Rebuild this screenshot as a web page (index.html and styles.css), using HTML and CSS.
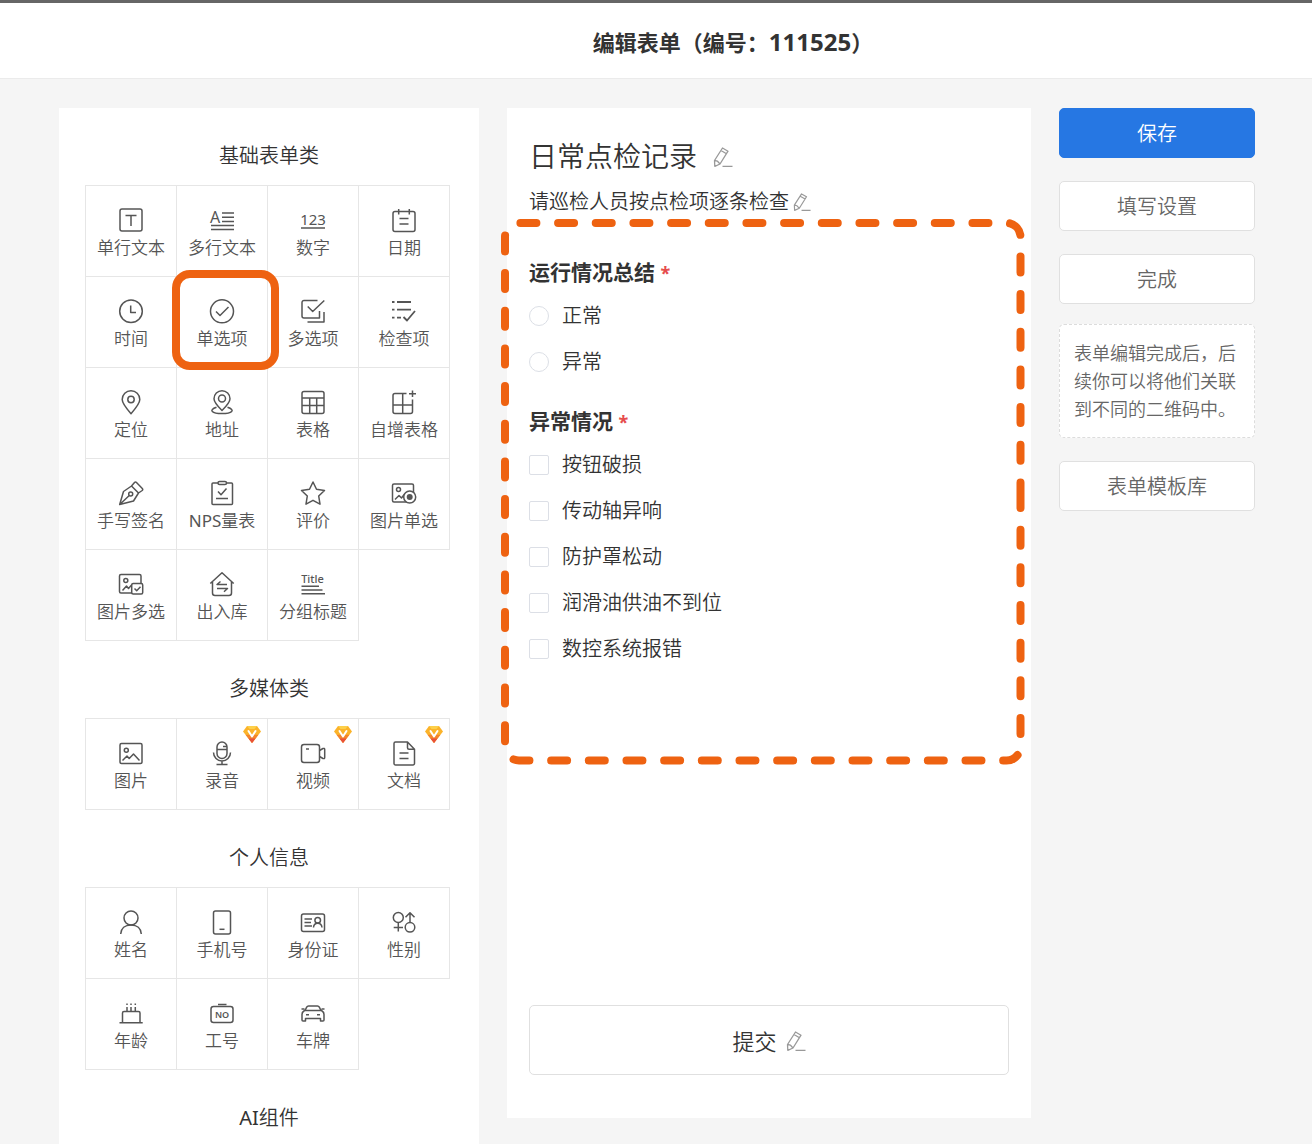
FILE: index.html
```html
<!DOCTYPE html>
<html lang="zh-CN">
<head>
<meta charset="utf-8">
<meta name="viewport" content="width=device-width, initial-scale=1">
<title>编辑表单</title>
<link rel="stylesheet" href="styles.css">
</head>
<body>
<svg class="sprite" aria-hidden="true">
  <symbol id="pencil" viewBox="0 0 20 20">
    <path d="M1.500 13.500 9.500 1 15 4.200 7 17 1.800 19.300zM8 3.500 13.500 6.800M1.500 13.500 4.500 14.200 7 17M9.500 19.300H19.500" fill="none" stroke="currentColor" stroke-width="1.300" stroke-linejoin="round"/>
  </symbol>
  <symbol id="gem" viewBox="0 0 18 18">
    <path d="M4 1h10l4 5.500L9 18 0 6.500z" fill="#fbb32a"/>
    <path d="M4 1h10l-2.500 3h-5z" fill="#fdd04a"/>
    <path d="M2.500 9.700h13L9 18z" fill="#f4842c"/>
    <path d="M5.500 13.500h7L9 18z" fill="#e8503a"/>
    <path d="M5.500 6 9 11.500 12.500 6" fill="none" stroke="#fff" stroke-width="2" stroke-linecap="round" stroke-linejoin="round"/>
  </symbol>
</svg>

<header class="topbar">
  <h1 class="topbar-title">编辑表单（编号：<span class="topbar-number">111525</span>）</h1>
</header>

<main class="workspace">
  <aside class="palette">
    <section class="group">
      <h2 class="group-title">基础表单类</h2>
      <div class="tiles">
        <button type="button" class="tile"><svg class="icon" viewBox="0 0 26 26"><rect x="2" y="2" width="22" height="22" rx="2"/><path d="M7.500 8.500H18.500M13 8.500V19"/></svg>单行文本</button>
        <button type="button" class="tile"><svg class="icon" viewBox="0 0 26 26"><text x="1" y="16" font-size="16">A</text><path d="M13 6H25M13 10.300H25M13 14.500H25M2 18.500H25M2 22.500H25"/></svg>多行文本</button>
        <button type="button" class="tile"><svg class="icon" viewBox="0 0 26 26"><text x="13" y="18" font-size="15" text-anchor="middle">123</text><path d="M1 21H25"/></svg>数字</button>
        <button type="button" class="tile"><svg class="icon" viewBox="0 0 26 26"><rect x="2" y="4.500" width="22" height="20" rx="2"/><path d="M7.700 2V7.500M18.300 2V7.500M8.500 11.500H17.500M8.500 17H17.500"/></svg>日期</button>
        <button type="button" class="tile"><svg class="icon" viewBox="0 0 26 26"><circle cx="13" cy="13.300" r="11.300"/><path d="M12.700 7.500V14.500H18"/></svg>时间</button>
        <button type="button" class="tile tile-marked"><svg class="icon" viewBox="0 0 26 26"><circle cx="13" cy="13.300" r="11.500"/><path d="M7 13.500 11 17.500 19.500 9"/></svg>单选项</button>
        <button type="button" class="tile"><svg class="icon" viewBox="0 0 26 26"><path d="M17.500 2.500H4a2 2 0 0 0-2 2V18a2 2 0 0 0 2 2H19.500V13M7.700 8.500 12.700 13.500 24.300 2.500M7.500 24H24V14"/></svg>多选项</button>
        <button type="button" class="tile"><svg class="icon" viewBox="0 0 26 26"><path d="M1 4H3.500M6 4H20M1 11.700H3.500M6 11.700H20M1 19.700H3.500M6 19.700H10M12.500 19 16 22.500 24 13" stroke-width="1.800"/></svg>检查项</button>
        <button type="button" class="tile"><svg class="icon" viewBox="0 0 26 26"><path d="M13 24.700C8 19 4.200 14.500 4.200 10.500a8.800 8.800 0 0 1 17.600 0C21.800 14.500 18 19 13 24.700z"/><circle cx="13" cy="10.500" r="3.200"/></svg>定位</button>
        <button type="button" class="tile"><svg class="icon" viewBox="0 0 26 26"><path d="M13 21.500C8.500 17 5 13.500 5 9.700a8 8 0 0 1 16 0C21 13.500 17.500 17 13 21.500z"/><circle cx="13" cy="9.500" r="3.500"/><path d="M7.500 18.300C-1 21 3 24.500 13 24.500S27 21 18.500 18.300"/></svg>地址</button>
        <button type="button" class="tile"><svg class="icon" viewBox="0 0 26 26"><rect x="2" y="2.500" width="22" height="22" rx="2"/><path d="M2 9H24M2 16.500H24M9.700 9V24.500M16.700 9V24.500"/></svg>表格</button>
        <button type="button" class="tile"><svg class="icon" viewBox="0 0 26 26"><path d="M15.500 4.500H4a2 2 0 0 0-2 2V22.500a2 2 0 0 0 2 2H19.500a2 2 0 0 0 2-2V10.500M11.700 4.500V24.500M2 16H21.500M21.500 1.500V8M18 4.700H25"/></svg>自增表格</button>
        <button type="button" class="tile"><svg class="icon" viewBox="0 0 26 26"><path d="M1.700 24.500 5.500 11.500 13.500 6 20.500 13 15.500 21zM1.700 24.500 11.300 15.500M13.500 6 16.500 2.500Q17.500 1.500 18.500 2.500L24.300 8.500Q25.200 9.500 24.200 10.500L20.500 13"/><circle cx="12.700" cy="14" r="2"/></svg>手写签名</button>
        <button type="button" class="tile"><svg class="icon" viewBox="0 0 26 26"><path d="M9 3H4a1 1 0 0 0-1 1V23.500a1 1 0 0 0 1 1H22.500a1 1 0 0 0 1-1V4a1 1 0 0 0-1-1H17.500M9 11.500 12 14.700 17.500 8.500M7 18.500H19"/><rect x="9" y="1.500" width="8.500" height="3" rx="1.500"/></svg><span><span class="latin">NPS</span>量表</span></button>
        <button type="button" class="tile"><svg class="icon" viewBox="0 0 26 26"><path d="M13 2 16.500 9.300 24.500 10.500 18.700 16 20 24.200 13 20.300 6 24.200 7.300 16 1.500 10.500 9.500 9.300z"/></svg>评价</button>
        <button type="button" class="tile"><svg class="icon" viewBox="0 0 26 26"><rect x="1.500" y="4" width="21" height="18" rx="1.500"/><circle cx="7.500" cy="9.500" r="2"/><path d="M4 19.500 8 15.500 10.500 18 14 13.500"/><circle class="paper" cx="18.700" cy="17" r="6"/><circle class="solid" cx="18.700" cy="17" r="3"/></svg>图片单选</button>
        <button type="button" class="tile"><svg class="icon" viewBox="0 0 26 26"><rect x="1.500" y="3.500" width="21.500" height="18.500" rx="1.500"/><circle cx="7.800" cy="9.500" r="2"/><path d="M4.500 19.500 8.500 15 10.500 17.500 14 13.500"/><rect class="paper" x="13.700" y="12.500" width="11" height="10.500" rx="1.500"/><path d="M16.500 17.500 18.700 19.700 22.500 15.800"/></svg>图片多选</button>
        <button type="button" class="tile"><svg class="icon" viewBox="0 0 26 26"><path d="M1.300 12.500 13 1.700 24.700 12.500M3.500 11V22a2.500 2.500 0 0 0 2.500 2.500H20a2.500 2.500 0 0 0 2.500-2.500V11M18 13.500H8L11.500 10.500M8 17.500H18.500L15 20.700"/></svg>出入库</button>
        <button type="button" class="tile"><svg class="icon" viewBox="0 0 26 26"><text x="12.500" y="11.500" font-size="11" font-weight="500" text-anchor="middle">Title</text><path d="M1.500 15.300H19M1.500 19H22.500M1.500 22.700H25"/></svg>分组标题</button>
      </div>
    </section>

    <section class="group">
      <h2 class="group-title">多媒体类</h2>
      <div class="tiles">
        <button type="button" class="tile"><svg class="icon" viewBox="0 0 26 26"><rect x="2" y="3.500" width="22" height="20" rx="1.500"/><circle cx="8.300" cy="10.300" r="2"/><path d="M4.500 20.500 9 16 11.200 18.500 15.500 14 21.500 20.500"/></svg>图片</button>
        <button type="button" class="tile"><svg class="icon" viewBox="0 0 26 26"><rect x="8" y="2" width="10" height="16.500" rx="5"/><path d="M8 9.500H18M14 6.500H18M4.500 12.500a8.500 8.500 0 0 0 17 0M13 21.300V24.500M7.500 24.500H18.500"/></svg>录音<svg class="gem"><use href="#gem"/></svg></button>
        <button type="button" class="tile"><svg class="icon" viewBox="0 0 26 26"><rect x="1.500" y="4.500" width="18" height="18" rx="2.500"/><path d="M19.500 10.500 23 8.500Q24.700 8 24.700 9.500V17.500Q24.700 19 23 18.500L19.500 16.500M6 9H9"/></svg>视频<svg class="gem"><use href="#gem"/></svg></button>
        <button type="button" class="tile"><svg class="icon" viewBox="0 0 26 26"><path d="M16.500 2H4.500a1.500 1.500 0 0 0-1.500 1.500V23.500A1.500 1.500 0 0 0 4.500 25H22a1.500 1.500 0 0 0 1.500-1.500V9.200zM16.500 2V7.700A1.500 1.500 0 0 0 18 9.200H23.500M8.500 13H17.500M8.500 18.500H17.500"/></svg>文档<svg class="gem"><use href="#gem"/></svg></button>
      </div>
    </section>

    <section class="group">
      <h2 class="group-title">个人信息</h2>
      <div class="tiles">
        <button type="button" class="tile"><svg class="icon" viewBox="0 0 26 26"><circle cx="13" cy="9" r="7"/><path d="M2.700 25C3 19.500 7 16 13 16S23 19.500 23.300 25"/></svg>姓名</button>
        <button type="button" class="tile"><svg class="icon" viewBox="0 0 26 26"><rect x="4.500" y="2" width="17" height="23" rx="2"/><path d="M10.500 20.300H15.500"/></svg>手机号</button>
        <button type="button" class="tile"><svg class="icon" viewBox="0 0 26 26"><rect x="1.500" y="5" width="23" height="17.500" rx="2"/><path d="M4.500 10H12M4.500 13.500H11M4.500 17H12M13.500 18.500C13.700 15.500 15.200 14.200 17.700 14.200S21.700 15.500 22 18.500"/><circle cx="17.700" cy="11.300" r="2.800"/></svg>身份证</button>
        <button type="button" class="tile"><svg class="icon" viewBox="0 0 26 26"><circle cx="7.300" cy="8.500" r="5"/><path d="M7.300 13.500V22.500M2.700 18.500H12M19 13.500V4M14.500 8.300 19 3.700 23.500 8.300"/><circle cx="19" cy="18.300" r="4.800"/></svg>性别</button>
        <button type="button" class="tile"><svg class="icon" viewBox="0 0 26 26"><path d="M1.500 22.700H24.700M4.500 22.500V13a1.500 1.500 0 0 1 1.500-1.500H20.500a1.500 1.500 0 0 1 1.500 1.500V22.500M9 7V11M13 7V11M17.300 7V11M9 3.500V5M13 3.500V5M17.300 3.500V5"/></svg>年龄</button>
        <button type="button" class="tile"><svg class="icon" viewBox="0 0 26 26"><rect x="2" y="6.500" width="22" height="16" rx="2.500"/><path d="M9 4.500H17.500"/><text x="13" y="18" font-size="9" font-weight="600" text-anchor="middle">NO</text></svg>工号</button>
        <button type="button" class="tile"><svg class="icon" viewBox="0 0 26 26"><path d="M5 10.500 6.700 7.200Q7.300 6 8.500 6H17.500Q18.700 6 19.300 7.200L21 10.500M1.500 9H4.500M21.500 9H24.500M4.500 10.500H21.500Q24 12 24 14.500V20a1 1 0 0 1-1 1H20.500V18.500H5.500V21H3a1 1 0 0 1-1-1V14.500Q2 12 4.500 10.500M6 14.700H9M17 14.700H20"/></svg>车牌</button>
      </div>
    </section>

    <section class="group">
      <h2 class="group-title"><span class="latin">AI</span>组件</h2>
    </section>
  </aside>

  <form class="sheet">
    <div class="sheet-line">
      <h2 class="sheet-title">日常点检记录</h2>
      <button type="button" class="edit" aria-label="编辑标题"><svg class="pencil"><use href="#pencil"/></svg></button>
    </div>
    <div class="sheet-line sheet-line-sub">
      <p class="sheet-note">请巡检人员按点检项逐条检查</p>
      <button type="button" class="edit edit-small" aria-label="编辑说明"><svg class="pencil"><use href="#pencil"/></svg></button>
    </div>

    <div class="questions">
      <svg class="frame" viewBox="0 0 524 546" preserveAspectRatio="none" aria-hidden="true">
        <path d="M519.500 273V527.500A14 14 0 0 1 505.500 541.500H18A14 14 0 0 1 4 527.500V18A14 14 0 0 1 18 4H505.500A14 14 0 0 1 519.500 18V273"/>
      </svg>
      <fieldset class="question">
        <legend class="question-title">运行情况总结 <span class="required">*</span></legend>
        <label class="option"><input type="radio" name="run" class="mark mark-round">正常</label>
        <label class="option"><input type="radio" name="run" class="mark mark-round">异常</label>
      </fieldset>
      <fieldset class="question">
        <legend class="question-title">异常情况 <span class="required">*</span></legend>
        <label class="option"><input type="checkbox" class="mark">按钮破损</label>
        <label class="option"><input type="checkbox" class="mark">传动轴异响</label>
        <label class="option"><input type="checkbox" class="mark">防护罩松动</label>
        <label class="option"><input type="checkbox" class="mark">润滑油供油不到位</label>
        <label class="option"><input type="checkbox" class="mark">数控系统报错</label>
      </fieldset>
    </div>

    <button type="button" class="submit">提交<svg class="pencil"><use href="#pencil"/></svg></button>
  </form>

  <aside class="actions">
    <button type="button" class="action action-primary">保存</button>
    <button type="button" class="action">填写设置</button>
    <button type="button" class="action">完成</button>
    <p class="hint">表单编辑完成后，后续你可以将他们关联到不同的二维码中。</p>
    <button type="button" class="action">表单模板库</button>
  </aside>
</main>
</body>
</html>
```
FILE: styles.css
```css
* {
  box-sizing: border-box;
}

body {
  margin: 0;
  background: #f5f5f5;
  color: #333;
  font-family: "Noto Sans", "Noto Sans CJK SC", sans-serif;
  font-weight: 350;
  font-size: 20px;
  line-height: 28px;
}

h1, h2, p, fieldset {
  margin: 0;
  padding: 0;
  border: 0;
  font-weight: inherit;
}

button {
  font: inherit;
  color: inherit;
  cursor: pointer;
}

.sprite {
  position: absolute;
  width: 0;
  height: 0;
}

.latin {
  font-weight: 400;
}

/* Header */
.topbar {
  display: flex;
  justify-content: center;
  padding: 26px 0 23px 154px;
  border-top: 3px solid #666;
  border-bottom: 1px solid #ebebeb;
  background: #fff;
}

.topbar-title {
  font-size: 22px;
  line-height: 26px;
  font-weight: 700;
}

.topbar-number {
  font-size: 24px;
}

.workspace {
  display: grid;
  grid-template-columns: 420fr 524fr 196fr;
  align-items: start;
  gap: 28px;
  padding: 29px 57px 0 59px;
}

/* Component palette */
.palette {
  display: flex;
  flex-direction: column;
  gap: 34px;
  min-height: calc(100vh - 108px);
  padding: 34px 26px 0;
  background: #fff;
}

.group-title {
  margin-bottom: 15px;
  font-size: 20px;
  text-align: center;
}

.group:last-child .group-title {
  margin-bottom: 0;
}

.tiles {
  display: grid;
  grid-template-columns: repeat(4, 1fr);
  padding: 0 4px 1px 0;
}

/* Neighbouring tiles share one border line */
.tile {
  position: relative;
  display: flex;
  flex-direction: column;
  align-items: center;
  gap: 2px;
  height: 92px;
  margin: 0 -1px -1px 0;
  padding: 21px 0 0;
  border: 1px solid #e6e6e6;
  background: #fff;
  color: #555;
  font-size: 17px;
  line-height: 26px;
}

.tile-marked {
  z-index: 1;
}

.tile-marked::after {
  content: "";
  position: absolute;
  inset: -7px -12px -3px -5px;
  border: 8px solid #ee6211;
  border-radius: 18px;
}

.icon {
  width: 26px;
  height: 26px;
  fill: none;
  stroke: #555;
  stroke-width: 1.5;
  stroke-linejoin: round;
  font-weight: 400;
}

.icon text {
  fill: #555;
  stroke: none;
  font-family: "Noto Sans", sans-serif;
}

.icon .paper {
  fill: #fff;
}

.icon .solid {
  fill: #555;
  stroke: none;
}

.gem {
  position: absolute;
  top: 6px;
  right: 6px;
  width: 18px;
  height: 18px;
}

/* Form sheet */
.sheet {
  display: flex;
  flex-direction: column;
  min-height: 1010px;
  padding: 28px 22px 43px;
  background: #fff;
}

.sheet-line {
  display: flex;
  align-items: center;
  gap: 16px;
}

.sheet-line-sub {
  gap: 4px;
  margin-top: 12px;
}

.sheet-title {
  font-size: 28px;
  line-height: 40px;
}

.edit {
  display: flex;
  padding: 2px 0 0;
  border: 0;
  background: none;
}

.edit-small {
  padding: 0;
}

.pencil {
  width: 20px;
  height: 20px;
  color: #999;
}

.edit-small .pencil {
  width: 18px;
  height: 18px;
}

.questions {
  position: relative;
  display: flex;
  flex-direction: column;
  gap: 31px;
  padding-top: 42px;
}

.frame {
  position: absolute;
  top: 3px;
  left: -28px;
  width: calc(100% + 44px);
  height: 546px;
  fill: none;
  stroke: #ee6211;
  stroke-width: 8;
  stroke-linecap: round;
  stroke-dasharray: 16 21.67;
  pointer-events: none;
}

.question {
  display: flex;
  flex-direction: column;
  gap: 18px;
}

.question-title {
  margin-bottom: 15px;
  padding: 0;
  font-size: 21px;
  font-weight: 700;
}

.required {
  color: #e64c4c;
  font-size: 18px;
}

.option {
  display: flex;
  align-items: center;
  gap: 13px;
}

.mark {
  appearance: none;
  width: 20px;
  height: 20px;
  margin: 0;
  border: 1px solid #dcdfe6;
  border-radius: 2px;
  background: #fff;
}

.mark-round {
  border-radius: 50%;
}

.submit {
  display: flex;
  align-items: center;
  justify-content: center;
  gap: 9px;
  height: 70px;
  margin-top: auto;
  padding: 2px 0 0;
  border: 1px solid #e0e0e0;
  border-radius: 5px;
  background: #fff;
  font-size: 22px;
}

/* Side actions */
.actions {
  display: flex;
  flex-direction: column;
}

.action {
  height: 50px;
  margin-bottom: 23px;
  padding: 2px 0 0;
  border: 1px solid #e0e0e0;
  border-radius: 5px;
  background: #fff;
  color: #666;
  font-size: 20px;
}

.action-primary {
  border-color: #2677e3;
  background: #2677e3;
  color: #fff;
}

.hint {
  margin: -3px 0 23px;
  padding: 14px;
  border: 1px dashed #dcdcdc;
  border-radius: 5px;
  background: #fff;
  color: #666;
  font-size: 18px;
}
```
